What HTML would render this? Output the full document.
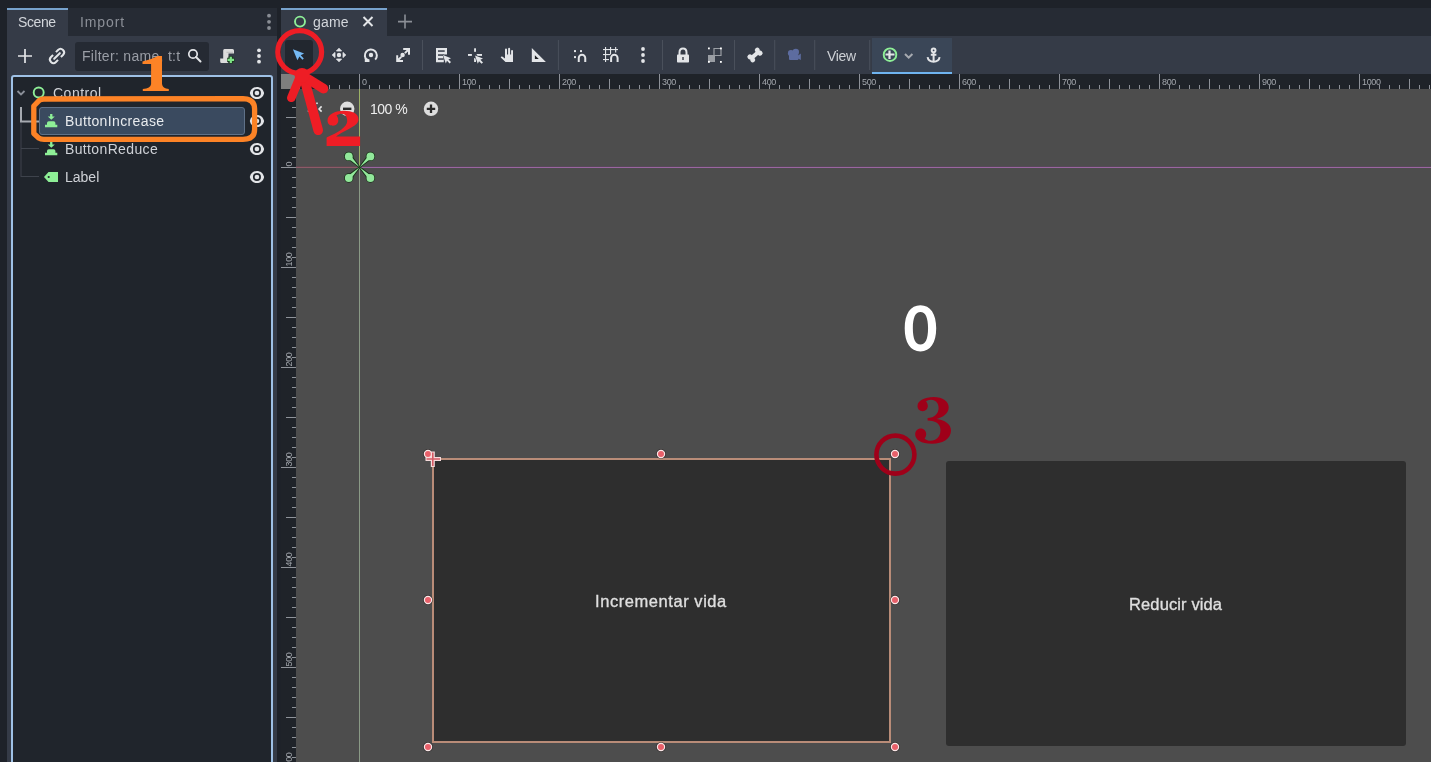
<!DOCTYPE html>
<html><head><meta charset="utf-8">
<style>
*{margin:0;padding:0;box-sizing:border-box}
html,body{width:1431px;height:762px;overflow:hidden;background:#1e2229;font-family:"Liberation Sans",sans-serif;position:relative}
.a{position:absolute}
.t{position:absolute;white-space:nowrap;line-height:1;will-change:transform}
svg.s{position:absolute;left:0;top:0;overflow:visible;will-change:transform}
</style></head><body>

<div class="a" style="left:7px;top:8px;width:270px;height:754px;background:#353b47;"></div>
<div class="a" style="left:68px;top:8px;width:209px;height:28px;background:#262b34;"></div>
<div class="a" style="left:7px;top:8px;width:61px;height:2px;background:#77a2cc;"></div>
<div class="t" style="left:18px;top:15px;font-size:14px;color:#d3d6db;letter-spacing:-0.4px">Scene</div>
<div class="t" style="left:79.5px;top:15px;font-size:14px;color:#8b8f97;letter-spacing:0.9px">Import</div>
<div class="a" style="left:75px;top:42px;width:134px;height:28.5px;background:#252a33;border-radius:3px"></div>
<div class="t" style="left:81.5px;top:48.5px;font-size:14px;color:#9a9ea6;letter-spacing:0.3px">Filter: name, t:t</div>
<div class="a" style="left:11px;top:75px;width:262px;height:700px;background:#20252c;border:2px solid #9fc1e6;border-radius:3px"></div>
<div class="a" style="left:39px;top:107px;width:206px;height:28px;background:#3a4a5f;border:1px solid #5f7188;border-radius:3px"></div>
<div class="t" style="left:53px;top:86px;font-size:14px;color:#cfd2d7;letter-spacing:0.5px">Control</div>
<div class="t" style="left:64.8px;top:114px;font-size:14px;color:#e8ebee;letter-spacing:0.38px">ButtonIncrease</div>
<div class="t" style="left:64.8px;top:142px;font-size:14px;color:#cfd2d7;letter-spacing:0.36px">ButtonReduce</div>
<div class="t" style="left:64.8px;top:170px;font-size:14px;color:#cfd2d7;">Label</div>
<div class="a" style="left:281px;top:8px;width:1150px;height:754px;background:#353b47;"></div>
<div class="a" style="left:387px;top:8px;width:1044px;height:28px;background:#262b34;"></div>
<div class="a" style="left:281px;top:8px;width:106px;height:2px;background:#77a2cc;"></div>
<div class="t" style="left:313px;top:15px;font-size:14px;color:#d3d6db;letter-spacing:0.2px">game</div>
<div class="a" style="left:285px;top:40px;width:28px;height:30px;background:#22272f;border-radius:3px"></div>
<div class="t" style="left:827px;top:48.5px;font-size:14px;color:#cdd0d5;letter-spacing:-0.3px">View</div>
<div class="a" style="left:872px;top:38px;width:80px;height:36px;background:#3a4657;"></div>
<div class="a" style="left:872px;top:72px;width:80px;height:2px;background:#6fb4f0;"></div>
<div class="a" style="left:281px;top:74px;width:1150px;height:15px;background:#1f2329;"></div>
<div class="a" style="left:281px;top:74px;width:15px;height:688px;background:#1f2329;"></div>
<div class="a" style="left:281px;top:74px;width:15px;height:15px;background:#7e7e7e;"></div>
<div class="a" style="left:296px;top:89px;width:1135px;height:673px;background:#4d4d4d;"></div>
<svg class="s" width="1431" height="762" viewBox="0 0 1431 762">
<g fill="#8e9299"><rect x="299" y="85" width="1" height="4"/><rect x="309" y="79" width="1" height="10"/><rect x="319" y="85" width="1" height="4"/><rect x="329" y="85" width="1" height="4"/><rect x="339" y="85" width="1" height="4"/><rect x="349" y="85" width="1" height="4"/><rect x="359" y="74" width="1" height="15"/><rect x="369" y="85" width="1" height="4"/><rect x="379" y="85" width="1" height="4"/><rect x="389" y="85" width="1" height="4"/><rect x="399" y="85" width="1" height="4"/><rect x="409" y="79" width="1" height="10"/><rect x="419" y="85" width="1" height="4"/><rect x="429" y="85" width="1" height="4"/><rect x="439" y="85" width="1" height="4"/><rect x="449" y="85" width="1" height="4"/><rect x="459" y="74" width="1" height="15"/><rect x="469" y="85" width="1" height="4"/><rect x="479" y="85" width="1" height="4"/><rect x="489" y="85" width="1" height="4"/><rect x="499" y="85" width="1" height="4"/><rect x="509" y="79" width="1" height="10"/><rect x="519" y="85" width="1" height="4"/><rect x="529" y="85" width="1" height="4"/><rect x="539" y="85" width="1" height="4"/><rect x="549" y="85" width="1" height="4"/><rect x="559" y="74" width="1" height="15"/><rect x="569" y="85" width="1" height="4"/><rect x="579" y="85" width="1" height="4"/><rect x="589" y="85" width="1" height="4"/><rect x="599" y="85" width="1" height="4"/><rect x="609" y="79" width="1" height="10"/><rect x="619" y="85" width="1" height="4"/><rect x="629" y="85" width="1" height="4"/><rect x="639" y="85" width="1" height="4"/><rect x="649" y="85" width="1" height="4"/><rect x="659" y="74" width="1" height="15"/><rect x="669" y="85" width="1" height="4"/><rect x="679" y="85" width="1" height="4"/><rect x="689" y="85" width="1" height="4"/><rect x="699" y="85" width="1" height="4"/><rect x="709" y="79" width="1" height="10"/><rect x="719" y="85" width="1" height="4"/><rect x="729" y="85" width="1" height="4"/><rect x="739" y="85" width="1" height="4"/><rect x="749" y="85" width="1" height="4"/><rect x="759" y="74" width="1" height="15"/><rect x="769" y="85" width="1" height="4"/><rect x="779" y="85" width="1" height="4"/><rect x="789" y="85" width="1" height="4"/><rect x="799" y="85" width="1" height="4"/><rect x="809" y="79" width="1" height="10"/><rect x="819" y="85" width="1" height="4"/><rect x="829" y="85" width="1" height="4"/><rect x="839" y="85" width="1" height="4"/><rect x="849" y="85" width="1" height="4"/><rect x="859" y="74" width="1" height="15"/><rect x="869" y="85" width="1" height="4"/><rect x="879" y="85" width="1" height="4"/><rect x="889" y="85" width="1" height="4"/><rect x="899" y="85" width="1" height="4"/><rect x="909" y="79" width="1" height="10"/><rect x="919" y="85" width="1" height="4"/><rect x="929" y="85" width="1" height="4"/><rect x="939" y="85" width="1" height="4"/><rect x="949" y="85" width="1" height="4"/><rect x="959" y="74" width="1" height="15"/><rect x="969" y="85" width="1" height="4"/><rect x="979" y="85" width="1" height="4"/><rect x="989" y="85" width="1" height="4"/><rect x="999" y="85" width="1" height="4"/><rect x="1009" y="79" width="1" height="10"/><rect x="1019" y="85" width="1" height="4"/><rect x="1029" y="85" width="1" height="4"/><rect x="1039" y="85" width="1" height="4"/><rect x="1049" y="85" width="1" height="4"/><rect x="1059" y="74" width="1" height="15"/><rect x="1069" y="85" width="1" height="4"/><rect x="1079" y="85" width="1" height="4"/><rect x="1089" y="85" width="1" height="4"/><rect x="1099" y="85" width="1" height="4"/><rect x="1109" y="79" width="1" height="10"/><rect x="1119" y="85" width="1" height="4"/><rect x="1129" y="85" width="1" height="4"/><rect x="1139" y="85" width="1" height="4"/><rect x="1149" y="85" width="1" height="4"/><rect x="1159" y="74" width="1" height="15"/><rect x="1169" y="85" width="1" height="4"/><rect x="1179" y="85" width="1" height="4"/><rect x="1189" y="85" width="1" height="4"/><rect x="1199" y="85" width="1" height="4"/><rect x="1209" y="79" width="1" height="10"/><rect x="1219" y="85" width="1" height="4"/><rect x="1229" y="85" width="1" height="4"/><rect x="1239" y="85" width="1" height="4"/><rect x="1249" y="85" width="1" height="4"/><rect x="1259" y="74" width="1" height="15"/><rect x="1269" y="85" width="1" height="4"/><rect x="1279" y="85" width="1" height="4"/><rect x="1289" y="85" width="1" height="4"/><rect x="1299" y="85" width="1" height="4"/><rect x="1309" y="79" width="1" height="10"/><rect x="1319" y="85" width="1" height="4"/><rect x="1329" y="85" width="1" height="4"/><rect x="1339" y="85" width="1" height="4"/><rect x="1349" y="85" width="1" height="4"/><rect x="1359" y="74" width="1" height="15"/><rect x="1369" y="85" width="1" height="4"/><rect x="1379" y="85" width="1" height="4"/><rect x="1389" y="85" width="1" height="4"/><rect x="1399" y="85" width="1" height="4"/><rect x="1409" y="79" width="1" height="10"/><rect x="1419" y="85" width="1" height="4"/><rect x="1429" y="85" width="1" height="4"/><rect x="292" y="97" width="4" height="1"/><rect x="292" y="107" width="4" height="1"/><rect x="286" y="117" width="10" height="1"/><rect x="292" y="127" width="4" height="1"/><rect x="292" y="137" width="4" height="1"/><rect x="292" y="147" width="4" height="1"/><rect x="292" y="157" width="4" height="1"/><rect x="281" y="167" width="15" height="1"/><rect x="292" y="177" width="4" height="1"/><rect x="292" y="187" width="4" height="1"/><rect x="292" y="197" width="4" height="1"/><rect x="292" y="207" width="4" height="1"/><rect x="286" y="217" width="10" height="1"/><rect x="292" y="227" width="4" height="1"/><rect x="292" y="237" width="4" height="1"/><rect x="292" y="247" width="4" height="1"/><rect x="292" y="257" width="4" height="1"/><rect x="281" y="267" width="15" height="1"/><rect x="292" y="277" width="4" height="1"/><rect x="292" y="287" width="4" height="1"/><rect x="292" y="297" width="4" height="1"/><rect x="292" y="307" width="4" height="1"/><rect x="286" y="317" width="10" height="1"/><rect x="292" y="327" width="4" height="1"/><rect x="292" y="337" width="4" height="1"/><rect x="292" y="347" width="4" height="1"/><rect x="292" y="357" width="4" height="1"/><rect x="281" y="367" width="15" height="1"/><rect x="292" y="377" width="4" height="1"/><rect x="292" y="387" width="4" height="1"/><rect x="292" y="397" width="4" height="1"/><rect x="292" y="407" width="4" height="1"/><rect x="286" y="417" width="10" height="1"/><rect x="292" y="427" width="4" height="1"/><rect x="292" y="437" width="4" height="1"/><rect x="292" y="447" width="4" height="1"/><rect x="292" y="457" width="4" height="1"/><rect x="281" y="467" width="15" height="1"/><rect x="292" y="477" width="4" height="1"/><rect x="292" y="487" width="4" height="1"/><rect x="292" y="497" width="4" height="1"/><rect x="292" y="507" width="4" height="1"/><rect x="286" y="517" width="10" height="1"/><rect x="292" y="527" width="4" height="1"/><rect x="292" y="537" width="4" height="1"/><rect x="292" y="547" width="4" height="1"/><rect x="292" y="557" width="4" height="1"/><rect x="281" y="567" width="15" height="1"/><rect x="292" y="577" width="4" height="1"/><rect x="292" y="587" width="4" height="1"/><rect x="292" y="597" width="4" height="1"/><rect x="292" y="607" width="4" height="1"/><rect x="286" y="617" width="10" height="1"/><rect x="292" y="627" width="4" height="1"/><rect x="292" y="637" width="4" height="1"/><rect x="292" y="647" width="4" height="1"/><rect x="292" y="657" width="4" height="1"/><rect x="281" y="667" width="15" height="1"/><rect x="292" y="677" width="4" height="1"/><rect x="292" y="687" width="4" height="1"/><rect x="292" y="697" width="4" height="1"/><rect x="292" y="707" width="4" height="1"/><rect x="286" y="717" width="10" height="1"/><rect x="292" y="727" width="4" height="1"/><rect x="292" y="737" width="4" height="1"/><rect x="292" y="747" width="4" height="1"/><rect x="292" y="757" width="4" height="1"/></g>
<g fill="#a3a7ad" font-family="Liberation Sans" font-size="9" letter-spacing="-0.35"><text x="362" y="85">0</text><text x="462" y="85">100</text><text x="562" y="85">200</text><text x="662" y="85">300</text><text x="762" y="85">400</text><text x="862" y="85">500</text><text x="962" y="85">600</text><text x="1062" y="85">700</text><text x="1162" y="85">800</text><text x="1262" y="85">900</text><text x="1362" y="85">1000</text><text transform="translate(291.5,166.5) rotate(-90)" x="0" y="0">0</text><text transform="translate(291.5,266.5) rotate(-90)" x="0" y="0">100</text><text transform="translate(291.5,366.5) rotate(-90)" x="0" y="0">200</text><text transform="translate(291.5,466.5) rotate(-90)" x="0" y="0">300</text><text transform="translate(291.5,566.5) rotate(-90)" x="0" y="0">400</text><text transform="translate(291.5,666.5) rotate(-90)" x="0" y="0">500</text><text transform="translate(291.5,766.5) rotate(-90)" x="0" y="0">600</text></g>
<rect x="296" y="89" width="1" height="0" />
<rect x="359" y="89" width="1" height="78" fill="#9db266"/>
<rect x="359" y="168" width="1" height="594" fill="#8a9a86"/>
<rect x="296" y="167" width="63" height="1" fill="#8c5a68"/>
<rect x="296" y="166" width="63" height="1" fill="#6a4852" opacity="0.6"/>
<rect x="360" y="167" width="1071" height="1" fill="#9a66a0"/>
<rect x="360" y="166" width="1071" height="1" fill="#5e4860" opacity="0.6"/>
</svg>
<div class="a" style="left:432px;top:458px;width:459px;height:285px;background:#2e2e2e;border:2px solid #b98c78"></div>
<div class="a" style="left:946px;top:461px;width:460px;height:285px;background:#2e2e2e;border-radius:3px"></div>
<div class="t" style="left:595px;top:592.5px;font-size:16.5px;color:#dfdfdf;letter-spacing:0.56px;-webkit-text-stroke:0.35px #dfdfdf">Incrementar vida</div>
<div class="t" style="left:1128.5px;top:595.5px;font-size:16.5px;color:#dfdfdf;letter-spacing:0.12px;-webkit-text-stroke:0.35px #dfdfdf">Reducir vida</div>
<div class="t" style="left:370px;top:102px;font-size:14px;color:#eeeeee;letter-spacing:-0.5px">100 %</div>
<svg class="s" width="1431" height="762" viewBox="0 0 1431 762" style="z-index:5">
<circle cx="269" cy="15.7" r="1.9" fill="#8a8e95"/>
<circle cx="269" cy="21.8" r="1.9" fill="#8a8e95"/>
<circle cx="269" cy="28" r="1.9" fill="#8a8e95"/>
<path d="M18 56H32M25 49V63" stroke="#e3e5e8" stroke-width="1.7"/>
<g transform="rotate(-45 57 56)" fill="none" stroke="#e3e5e8" stroke-width="2"><path d="M55 52.5H52Q48.5 52.5 48.5 56Q48.5 59.5 52 59.5H55"/><path d="M59 52.5H62Q65.5 52.5 65.5 56Q65.5 59.5 62 59.5H59"/><path d="M53 56H61" stroke-linecap="round"/></g>
<circle cx="193" cy="54" r="4.2" fill="none" stroke="#e3e5e8" stroke-width="1.7"/><path d="M196 57L200.5 61.5" stroke="#e3e5e8" stroke-width="2" stroke-linecap="round"/>
<path d="M224.5 49H232.5Q234 49 234 50.5V53.5H228.5V61.5Q228.5 63 227 63H221.5Q220.2 63 220.2 61.5V58.5H223.2V50.5Q223.2 49 224.5 49Z" fill="#dcdcdc"/>
<path d="M226.5 52.3H233" stroke="#b5b5b5" stroke-width="0.8"/>
<path d="M227.2 59.9H234.4M230.8 56.3V63.5" stroke="#1d3a20" stroke-width="4.2"/><path d="M227.6 59.9H234M230.8 56.7V63.1" stroke="#7ee486" stroke-width="2.2"/>
<circle cx="259" cy="50.3" r="1.9" fill="#e3e5e8"/>
<circle cx="259" cy="56" r="1.9" fill="#e3e5e8"/>
<circle cx="259" cy="61.7" r="1.9" fill="#e3e5e8"/>
<path d="M17.5 91L21 94.5L24.5 91" fill="none" stroke="#8b9099" stroke-width="1.8"/>
<circle cx="38.7" cy="92.5" r="5" fill="none" stroke="#8eef97" stroke-width="1.9"/>
<path d="M21 122V177M21 148.5H39M21 176.5H39" stroke="#3e434c" stroke-width="1" fill="none"/>
<path d="M21 107V121.5H39" stroke="#a6aab0" stroke-width="2" fill="none"/>
<g fill="#8eef97"><rect x="50.1" y="114.0" width="2.3" height="3.8"/><path d="M47.8 116.5H54.8L51.3 119.8Z"/><path d="M47 124.8V122.89999999999999Q47 121.3 48.8 121.3H53.6Q55.4 121.3 55.4 122.89999999999999V124.8H57.3V127.3H45V124.8Z"/></g>
<g fill="#8eef97"><rect x="50.1" y="142.0" width="2.3" height="3.8"/><path d="M47.8 144.5H54.8L51.3 147.8Z"/><path d="M47 152.8V150.9Q47 149.3 48.8 149.3H53.6Q55.4 149.3 55.4 150.9V152.8H57.3V155.3H45V152.8Z"/></g>
<path d="M44 177L48.5 172H58V182H48.5Z" fill="#8eef97"/><circle cx="48.7" cy="177" r="1.1" fill="#20252c"/>
<path fill-rule="evenodd" d="M249.8 93C251.3 84.9 262.6 84.9 264.1 93C262.6 101.1 251.3 101.1 249.8 93ZM252.95 93A4 4 0 0 0 260.95 93A4 4 0 0 0 252.95 93Z" fill="#e3e5e8"/><circle cx="256.95" cy="93" r="2.3" fill="#e3e5e8"/>
<path fill-rule="evenodd" d="M249.8 121C251.3 112.9 262.6 112.9 264.1 121C262.6 129.1 251.3 129.1 249.8 121ZM252.95 121A4 4 0 0 0 260.95 121A4 4 0 0 0 252.95 121Z" fill="#e3e5e8"/><circle cx="256.95" cy="121" r="2.3" fill="#e3e5e8"/>
<path fill-rule="evenodd" d="M249.8 149C251.3 140.9 262.6 140.9 264.1 149C262.6 157.1 251.3 157.1 249.8 149ZM252.95 149A4 4 0 0 0 260.95 149A4 4 0 0 0 252.95 149Z" fill="#e3e5e8"/><circle cx="256.95" cy="149" r="2.3" fill="#e3e5e8"/>
<path fill-rule="evenodd" d="M249.8 177C251.3 168.9 262.6 168.9 264.1 177C262.6 185.1 251.3 185.1 249.8 177ZM252.95 177A4 4 0 0 0 260.95 177A4 4 0 0 0 252.95 177Z" fill="#e3e5e8"/><circle cx="256.95" cy="177" r="2.3" fill="#e3e5e8"/>
<circle cx="300" cy="21.6" r="5" fill="none" stroke="#8eef97" stroke-width="1.9"/>
<path d="M363.5 17L372.5 26M372.5 17L363.5 26" stroke="#e3e5e8" stroke-width="2"/>
<path d="M398 21.6H412M405 14.6V28.6" stroke="#8b8f96" stroke-width="1.6"/>
<path d="M292.9 49.2L304.1 53.6L300.7 55.3L303.8 58.4L302.5 59.7L299.4 56.6L297.4 60.2Z" fill="#74b9f4"/>
<g fill="#e3e5e8" stroke="#e3e5e8" stroke-width="0.8" stroke-linejoin="round"><circle cx="339" cy="55" r="2.2" stroke="none"/><path d="M339 48.2L341.6 51H336.4Z"/><path d="M339 61.8L341.6 59H336.4Z"/><path d="M332.2 55L335 52.4V57.6Z"/><path d="M345.8 55L343 52.4V57.6Z"/></g>
<g><path d="M367.2 60.2A6 6 0 1 1 375.2 59.6" fill="none" stroke="#e3e5e8" stroke-width="2"/><circle cx="371" cy="55" r="2.2" fill="#e3e5e8"/><path d="M364.8 57.6L369.5 59.6V62H364.8Z" fill="#e3e5e8"/></g>
<g fill="#e3e5e8"><circle cx="402.6" cy="55" r="2.2"/><path d="M403.2 48H410V54.7H408V51.4L405.6 53.8L404.2 52.4L406.6 50H403.2Z"/><path d="M403 62H396.2V55.3H398.2V58.6L400.6 56.2L402 57.6L399.6 60H403Z"/></g>
<rect x="422.0" y="40" width="1" height="30" fill="#4a505b"/>
<rect x="557.9" y="40" width="1" height="30" fill="#4a505b"/>
<rect x="662.0" y="40" width="1" height="30" fill="#4a505b"/>
<rect x="734.0" y="40" width="1" height="30" fill="#4a505b"/>
<rect x="774.2" y="40" width="1" height="30" fill="#4a505b"/>
<rect x="814.2" y="40" width="1" height="30" fill="#4a505b"/>
<rect x="869.2" y="40" width="1" height="30" fill="#4a505b"/>
<path d="M436 48H447V54.5H443.8V62.2H436Z" fill="#e3e5e8"/>
<g fill="#353b47"><rect x="438" y="50.3" width="6.7" height="1.5"/><rect x="438" y="54.3" width="5.8" height="1.5"/><rect x="438" y="58.3" width="5.8" height="1.5"/></g>
<path d="M443 55L451 58.2L448.4 59.4L451 62L449.6 63.4L447 60.8L445.8 63.4Z" fill="#e3e5e8" stroke="#353b47" stroke-width="1" paint-order="stroke"/>
<g fill="#e3e5e8"><rect x="474.1" y="48.3" width="1.9" height="3.5"/><rect x="468" y="54" width="3.9" height="1.9"/><rect x="476.7" y="54" width="5.3" height="1.9"/><rect x="474.1" y="58.1" width="1.9" height="3.9"/></g>
<path d="M475 55.4L483 58.6L480.4 59.8L483 62.4L481.6 63.8L479 61.2L477.8 63.8Z" fill="#e3e5e8" stroke="#353b47" stroke-width="1.2" paint-order="stroke"/>
<path d="M505 49.5Q505 48.6 506 48.6Q507 48.6 507 49.5V54.5H508.1V48.8Q508.1 47.8 509.1 47.8Q510.1 47.8 510.1 48.8V54.5H511.1V50.8Q511.1 49.9 512.05 49.9Q513 49.9 513 50.8V62H505.5L500.8 57.6Q500.6 56.2 502.2 56.4L505 58.6Z" fill="#e3e5e8"/>
<path d="M531.8 47.9L545.9 62H531.8Z" fill="#e3e5e8"/><path d="M534.9 55.2L538.8 59.1H534.9Z" fill="#1e2024"/>
<g fill="#e3e5e8"><rect x="574" y="50.1" width="2" height="2"/><rect x="580" y="50.1" width="2" height="2"/><rect x="574" y="56.1" width="2" height="2"/></g><path d="M578.75 62V58A3.25 3.25 0 0 1 585.25 58V62" fill="none" stroke="#e3e5e8" stroke-width="2"/>
<g fill="#e3e5e8"><rect x="605" y="47" width="1.1" height="15"/><rect x="610" y="47" width="1.1" height="7.5"/><rect x="615.1" y="47" width="1.1" height="5.5"/><rect x="603" y="49" width="15" height="1.1"/><rect x="603" y="54" width="7.5" height="1.1"/><rect x="603" y="59" width="6" height="1.1"/></g><path d="M611.1 62V58A3.25 3.25 0 0 1 617.6 58V62" fill="none" stroke="#353b47" stroke-width="3.6"/><path d="M611.1 62V58A3.25 3.25 0 0 1 617.6 58V62" fill="none" stroke="#e3e5e8" stroke-width="2"/>
<circle cx="643" cy="49" r="1.9" fill="#e3e5e8"/>
<circle cx="643" cy="55" r="1.9" fill="#e3e5e8"/>
<circle cx="643" cy="61" r="1.9" fill="#e3e5e8"/>
<path d="M679.5 55V52.5Q679.5 48.5 683 48.5Q686.5 48.5 686.5 52.5V55" fill="none" stroke="#e3e5e8" stroke-width="2"/><rect x="677" y="54.5" width="12" height="8" rx="0.8" fill="#e3e5e8"/><rect x="682.3" y="57" width="1.4" height="3" fill="#353b47"/>
<g><rect x="708" y="55" width="7" height="7" fill="#9a9ea4"/><path d="M714 48.5H721V55.5H714Z" fill="none" stroke="#9a9ea4" stroke-width="1.2"/><g fill="#fff"><rect x="708" y="47.5" width="1.8" height="1.8"/><rect x="720" y="47.5" width="1.8" height="1.8"/><rect x="708" y="61" width="1.8" height="1.8"/><rect x="720" y="61" width="1.8" height="1.8"/></g></g>
<g transform="rotate(-42 755 55)" fill="#e3e5e8"><rect x="750" y="53" width="10" height="4"/><circle cx="750" cy="52.9" r="2.5"/><circle cx="750" cy="57.1" r="2.5"/><circle cx="760" cy="52.9" r="2.5"/><circle cx="760" cy="57.1" r="2.5"/></g>
<g fill="#5d6ca0"><circle cx="791" cy="53.2" r="3.1"/><circle cx="795.8" cy="52" r="3.2"/><rect x="789" y="54" width="9.5" height="6" rx="1"/><path d="M797.5 56L800.8 53.5V60.1L797.5 58.3Z"/></g>
<circle cx="890" cy="54.7" r="6.3" fill="none" stroke="#8eef97" stroke-width="1.9"/><path d="M885.5 54.5H894.5M889.5 50.5V59" stroke="#e3e5e8" stroke-width="2.2"/>
<path d="M905 54L908.7 57.7L912.4 54" fill="none" stroke="#a6aab0" stroke-width="2"/>
<g fill="none" stroke="#e3e5e8" stroke-width="2"><circle cx="933.6" cy="50.3" r="1.9"/><path d="M933.6 52.2V61.5M930.8 54.8H936.4"/><path d="M927.6 57.2Q928.4 61.8 933.6 61.8Q938.8 61.8 939.6 57.2"/></g>
<path fill="#ffffff" fill-rule="evenodd" d="M920.45 305.2C930.37 305.2 936.2 313.75 936.2 328.3C936.2 342.85 930.37 351.40000000000003 920.45 351.40000000000003C910.53 351.40000000000003 904.7 342.85 904.7 328.3C904.7 313.75 910.53 305.2 920.45 305.2ZM920.45 312.0C925.47 312.0 928.0500000000001 317.54 928.0500000000001 328.3C928.0500000000001 339.06 925.47 344.6 920.45 344.6C915.43 344.6 912.85 339.06 912.85 328.3C912.85 317.54 915.43 312.0 920.45 312.0Z"/>
<circle cx="347.2" cy="108.8" r="7.2" fill="#dedede"/><rect x="343" y="107.6" width="8.4" height="2.4" fill="#2a2a2a"/>
<circle cx="431" cy="108.8" r="7.2" fill="#dedede"/><path d="M426.8 108.8H435.2M431 104.6V113" stroke="#2a2a2a" stroke-width="2.3"/>
<g fill="#e6e6e6"><rect x="316.2" y="102.5" width="1.6" height="1.6"/><rect x="307.8" y="110.3" width="1.6" height="1.6"/></g><path d="M321.6 106.4L319.1 109L321.6 111.6" fill="none" stroke="#e6e6e6" stroke-width="1.6"/>
<g stroke="#173218" stroke-width="1.6" fill="#92e89b">
<path d="M359.6 167.2L350.36 154.84L347.24 157.96Z"/>
<circle cx="348.8" cy="156.39999999999998" r="3.9"/>
<path d="M359.6 167.2L371.96 157.96L368.84 154.84Z"/>
<circle cx="370.40000000000003" cy="156.39999999999998" r="3.9"/>
<path d="M359.6 167.2L347.24 176.44L350.36 179.56Z"/>
<circle cx="348.8" cy="178.0" r="3.9"/>
<path d="M359.6 167.2L368.84 179.56L371.96 176.44Z"/>
<circle cx="370.40000000000003" cy="178.0" r="3.9"/>
</g>
<g fill="#92e89b">
<path d="M359.6 167.2L350.21 154.99L347.39 157.81Z"/>
<circle cx="348.8" cy="156.39999999999998" r="3.9"/>
<path d="M359.6 167.2L371.81 157.81L368.99 154.99Z"/>
<circle cx="370.40000000000003" cy="156.39999999999998" r="3.9"/>
<path d="M359.6 167.2L347.39 176.59L350.21 179.41Z"/>
<circle cx="348.8" cy="178.0" r="3.9"/>
<path d="M359.6 167.2L368.99 179.41L371.81 176.59Z"/>
<circle cx="370.40000000000003" cy="178.0" r="3.9"/>
</g>
<circle cx="428" cy="454" r="4.9" fill="#231a1a" opacity="0.55"/><circle cx="428" cy="454" r="3.6" fill="#e8606a" stroke="#fbe8e8" stroke-width="1.2"/>
<circle cx="661" cy="454" r="4.9" fill="#231a1a" opacity="0.55"/><circle cx="661" cy="454" r="3.6" fill="#e8606a" stroke="#fbe8e8" stroke-width="1.2"/>
<circle cx="895" cy="454" r="4.9" fill="#231a1a" opacity="0.55"/><circle cx="895" cy="454" r="3.6" fill="#e8606a" stroke="#fbe8e8" stroke-width="1.2"/>
<circle cx="428" cy="600" r="4.9" fill="#231a1a" opacity="0.55"/><circle cx="428" cy="600" r="3.6" fill="#e8606a" stroke="#fbe8e8" stroke-width="1.2"/>
<circle cx="895" cy="600" r="4.9" fill="#231a1a" opacity="0.55"/><circle cx="895" cy="600" r="3.6" fill="#e8606a" stroke="#fbe8e8" stroke-width="1.2"/>
<circle cx="428" cy="747" r="4.9" fill="#231a1a" opacity="0.55"/><circle cx="428" cy="747" r="3.6" fill="#e8606a" stroke="#fbe8e8" stroke-width="1.2"/>
<circle cx="661" cy="747" r="4.9" fill="#231a1a" opacity="0.55"/><circle cx="661" cy="747" r="3.6" fill="#e8606a" stroke="#fbe8e8" stroke-width="1.2"/>
<circle cx="895" cy="747" r="4.9" fill="#231a1a" opacity="0.55"/><circle cx="895" cy="747" r="3.6" fill="#e8606a" stroke="#fbe8e8" stroke-width="1.2"/>
<path d="M425.5 459H441M432.8 451.5V467" stroke="#f7dcdc" stroke-width="4"/><path d="M426.5 459H440M432.8 452.5V466" stroke="#d45a64" stroke-width="1.6"/>
</svg>
<svg class="s" width="1431" height="762" viewBox="0 0 1431 762" style="z-index:10">
<path d="M33.8 106L39.5 100.2Q41 99 44 99L243 98.6Q254.6 99 254.6 109V129.5Q254.6 139.3 243 139.4L44 139.4Q40.6 139.4 39 138.2L33.8 133.5Z" fill="none" stroke="#fd8326" stroke-width="5.3" stroke-linejoin="round"/>
<ellipse cx="299.7" cy="52" rx="21.9" ry="21.3" fill="none" stroke="#ee1d25" stroke-width="5.2"/>
<g stroke="#ee1d25" stroke-linecap="round" fill="none"><path d="M304.3 79L318.2 130.3" stroke-width="9.6"/><path d="M300.5 75.5L291.3 97.8" stroke-width="8.6"/><path d="M302.5 75.5L323.5 88.6" stroke-width="9.6"/></g><circle cx="302" cy="75.3" r="7.4" fill="#ee1d25"/>
<path fill="#fd8326" d="M162 55.9V84Q162.5 88.5 168.8 89V91.1H142.8V89Q150.6 88.5 151.1 84V63.9H142.5V61.5Q150 60 157.9 55.9Z"/>
<path fill="#ee1d25" d="M326.6 146H360.1V136.4H336C346 129.5 358.5 126 358.5 119.5C358.5 113.5 352 110.8 344 110.8C336 110.8 327.5 114 327.5 120.5C327.5 124 330 125.7 333 125.7C336.5 125.7 338.3 123 338.3 120.5C338.3 118 337.3 116.5 336.5 115.5C338 114.3 340 113.8 341.5 113.8C345.5 113.8 347.2 117 347.2 121C347.2 127 338 132.5 326.6 137.5Z"/>
<path fill="#9f0019" d="M917.5 406C917.5 400.5 925 397 933.5 397C943 397 948.7 401.5 948.7 407.5C948.7 413 943 417.5 936.5 419C944.5 420 951 424 951 430.5C951 438.5 943 443.8 932 443.8C921 443.8 915.2 439.5 915.2 434.5C915.2 431 917.5 428.5 920.8 428.5C924 428.5 926.2 431 926.2 434C926.2 436.5 925 438 924.5 438.5C926 440 928.5 440.8 930.5 440.8C936.5 440.8 940.5 436.5 940.5 430C940.5 424 936 420.4 927.6 420.4V418C934.5 418 938.6 413.5 938.6 408C938.6 402.5 935 399.8 931 399.8C929 399.8 927 400.5 926 401.5C927 402.5 927.8 404 927.8 406C927.8 409 925.5 411.2 922.7 411.2C919.5 411.2 917.5 409 917.5 406Z"/>
<circle cx="895.4" cy="454.6" r="19" fill="none" stroke="#9f0019" stroke-width="4.6"/>
</svg>
</body></html>
